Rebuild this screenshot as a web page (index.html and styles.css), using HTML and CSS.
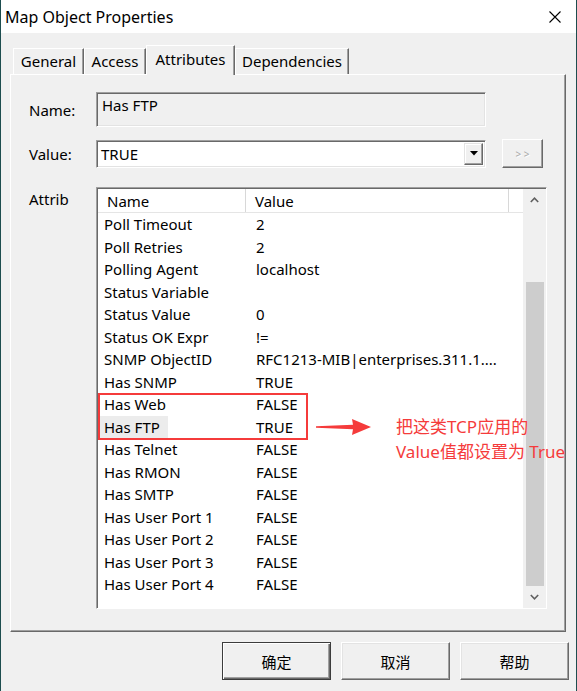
FILE: index.html
```html
<!DOCTYPE html>
<html>
<head>
<meta charset="utf-8">
<link rel="stylesheet" href="styles.css">
</head>
<body>
<div class="window">
  <div class="titlebar">
    <span class="title">Map Object Properties</span>
    <svg class="close" viewBox="0 0 12 12" width="12" height="12"><path d="M0.5 0.5 L11.5 11.5 M11.5 0.5 L0.5 11.5" stroke="#000" stroke-width="1.1" fill="none"/></svg>
  </div>
  <div class="tabs">
    <div class="tab tab-general">General</div>
    <div class="tab tab-access">Access</div>
    <div class="tab tab-attr active">Attributes</div>
    <div class="tab tab-dep">Dependencies</div>
  </div>
  <div class="panel">
    <div class="field-row">
      <div class="label">Name:</div>
      <div class="namebox">Has FTP</div>
    </div>
    <div class="field-row value-row">
      <div class="label">Value:</div>
      <div class="combo">
        <span class="combo-text">TRUE</span>
        <div class="drop"><svg viewBox="0 0 8 5" width="8" height="5"><path d="M0 0 L8 0 L4 4.5 Z" fill="#000"/></svg></div>
      </div>
      <div class="morebtn">&gt; &gt;</div>
    </div>
    <div class="field-row attrib-row">
      <div class="label label-top">Attrib</div>
      <div class="listview">
        <div class="lv-main">
          <div class="lv-header">
            <div class="h-name">Name</div>
            <div class="h-value">Value</div>
            <div class="h-rest"></div>
          </div>
          <div class="lv-row"><div class="c-name">Poll Timeout</div><div class="c-value">2</div></div>
          <div class="lv-row"><div class="c-name">Poll Retries</div><div class="c-value">2</div></div>
          <div class="lv-row"><div class="c-name">Polling Agent</div><div class="c-value">localhost</div></div>
          <div class="lv-row"><div class="c-name">Status Variable</div><div class="c-value"></div></div>
          <div class="lv-row"><div class="c-name">Status Value</div><div class="c-value">0</div></div>
          <div class="lv-row"><div class="c-name">Status OK Expr</div><div class="c-value">!=</div></div>
          <div class="lv-row"><div class="c-name">SNMP ObjectID</div><div class="c-value">RFC1213-MIB|enterprises.311.1....</div></div>
          <div class="lv-row"><div class="c-name">Has SNMP</div><div class="c-value">TRUE</div></div>
          <div class="lv-row"><div class="c-name">Has Web</div><div class="c-value">FALSE</div></div>
          <div class="lv-row"><div class="c-name"><span class="sel">Has FTP</span></div><div class="c-value">TRUE</div></div>
          <div class="lv-row"><div class="c-name">Has Telnet</div><div class="c-value">FALSE</div></div>
          <div class="lv-row"><div class="c-name">Has RMON</div><div class="c-value">FALSE</div></div>
          <div class="lv-row"><div class="c-name">Has SMTP</div><div class="c-value">FALSE</div></div>
          <div class="lv-row"><div class="c-name">Has User Port 1</div><div class="c-value">FALSE</div></div>
          <div class="lv-row"><div class="c-name">Has User Port 2</div><div class="c-value">FALSE</div></div>
          <div class="lv-row"><div class="c-name">Has User Port 3</div><div class="c-value">FALSE</div></div>
          <div class="lv-row"><div class="c-name">Has User Port 4</div><div class="c-value">FALSE</div></div>
        </div>
        <div class="scrollbar">
          <div class="sb-arrow"><svg viewBox="0 0 9 6" width="9" height="6"><polyline points="0.8,5 4.5,1.2 8.2,5" fill="none" stroke="#606060" stroke-width="1.6"/></svg></div>
          <div class="sb-track"><div class="sb-thumb"></div></div>
          <div class="sb-arrow"><svg viewBox="0 0 9 6" width="9" height="6"><polyline points="0.8,1 4.5,4.8 8.2,1" fill="none" stroke="#606060" stroke-width="1.6"/></svg></div>
        </div>
      </div>
    </div>
  </div>
  <div class="buttons">
    <div class="btn default">确定</div>
    <div class="btn">取消</div>
    <div class="btn">帮助</div>
  </div>

  <div class="mark-box"></div>
  <svg class="mark-arrow" viewBox="0 0 55 18" width="55" height="18"><polygon points="0,8.2 37,6.8 36,1 55,9 36,17 37,11.2 0,9.8" fill="#f53b3b"/></svg>
  <div class="mark-text">把这类TCP应用的<br>Value值都设置为 True</div>
</div>
</body>
</html>
```

FILE: styles.css
```css
* { box-sizing: border-box; }
html, body { margin: 0; padding: 0; }
body {
  width: 577px;
  height: 691px;
  overflow: hidden;
  font-family: "Noto Sans", "Noto Sans CJK SC", sans-serif;
  font-size: 15px;
  color: #000;
  background: #f0f0f0;
}
.window {
  position: relative;
  width: 577px;
  height: 691px;
  border-left: 1px solid #1d4d4f;
  border-right: 1px solid #1d4d4f;
  background: #f0f0f0;
  display: flex;
  flex-direction: column;
}
.titlebar {
  height: 33px;
  flex: none;
  background: #fff;
  display: flex;
  align-items: center;
  justify-content: space-between;
  padding: 0 15px 0 4px;
}
.title { font-size: 16px; }
.close { display: block; }

.tabs {
  display: flex;
  align-items: flex-end;
  height: 42px;
  flex: none;
  padding-left: 12px;
  margin-bottom: -1px;
  position: relative;
  z-index: 1;
}
.tab {
  height: 26px;
  margin-bottom: 1px;
  border-top: 1px solid #fff;
  border-left: 1px solid #fff;
  border-right: 1px solid #696969;
  box-shadow: inset -1px 0 #a0a0a0;
  display: flex;
  align-items: center;
  justify-content: center;
  padding-bottom: 1px;
  background: #f0f0f0;
}
.tab-general { width: 71px; }
.tab-access { width: 62px; }
.tab-attr { width: 89px; }
.tab-dep { width: 114px; }
.tab.active {
  height: 30px;
  margin-bottom: 0;
  padding-bottom: 4px;
}

.panel {
  margin-left: 9px;
  width: 556px;
  height: 558px;
  flex: none;
  border: 1px solid;
  border-color: #fff #696969 #696969 #fff;
  box-shadow: inset -1px -1px #a0a0a0;
  padding: 17px 0 0 18px;
}
.field-row { display: flex; align-items: center; }
.label { width: 67px; flex: none; }
.label-top { padding-top: 2px; }
.namebox {
  width: 390px;
  height: 35px;
  border: 1px solid;
  border-color: #a0a0a0 #fff #fff #a0a0a0;
  box-shadow: inset 1px 1px #696969, inset -1px -1px #e3e3e3;
  padding: 2px 5px;
}
.value-row { margin-top: 12px; }
.combo {
  width: 390px;
  height: 28px;
  border: 1px solid;
  border-color: #a0a0a0 #fff #fff #a0a0a0;
  box-shadow: inset 1px 1px #696969, inset -1px -1px #e3e3e3;
  background: #fff;
  display: flex;
  align-items: center;
  padding: 2px 2px 2px 4px;
}
.combo-text { flex: 1; }
.drop {
  width: 19px;
  height: 22px;
  border: 1px solid;
  border-color: #e3e3e3 #696969 #696969 #e3e3e3;
  box-shadow: inset -1px -1px #a0a0a0, inset 1px 1px #fff;
  background: #f0f0f0;
  display: flex;
  align-items: center;
  justify-content: center;
}
.drop svg { display: block; }
.morebtn {
  margin-left: 16px;
  width: 41px;
  height: 29px;
  border: 1px solid;
  border-color: #fff #696969 #696969 #fff;
  box-shadow: inset -1px -1px #a0a0a0;
  display: flex;
  align-items: center;
  justify-content: center;
  font-size: 10px;
  color: #a8a8a8;
  text-shadow: 1px 1px #fff;
}
.attrib-row { margin-top: 19px; align-items: flex-start; }
.listview {
  width: 451px;
  height: 422px;
  border: 1px solid;
  border-color: #a0a0a0 #fff #fff #a0a0a0;
  box-shadow: inset 1px 1px #696969;
  padding: 1px 0 0 1px;
  background: #fff;
  display: flex;
}
.lv-main { flex: 1; }
.lv-header {
  display: flex;
  height: 24px;
  border-bottom: 1px solid #e5e5e5;
}
.h-name {
  width: 148px;
  padding-left: 9px;
  border-right: 1px solid #d8d8d8;
  display: flex;
  align-items: center;
}
.h-value {
  width: 263px;
  padding-left: 9px;
  border-right: 1px solid #d8d8d8;
  display: flex;
  align-items: center;
}
.h-rest { flex: 1; }
.lv-row {
  display: flex;
  height: 22.5px;
  align-items: center;
  white-space: nowrap;
}
.c-name { width: 148px; padding-left: 6px; }
.c-value { padding-left: 10px; }
.sel {
  background: #ececec;
  padding: 1px 8px 1px 4px;
  margin-left: -4px;
}
.scrollbar {
  width: 23px;
  display: flex;
  flex-direction: column;
  background: #f0f0f0;
}
.sb-arrow {
  height: 23px;
  display: flex;
  align-items: center;
  justify-content: center;
}
.sb-arrow svg { display: block; }
.sb-track { flex: 1; padding: 71px 2px 0 3px; }
.sb-thumb { height: 304px; background: #cdcdcd; }

.buttons {
  display: flex;
  justify-content: flex-end;
  gap: 10px;
  padding-right: 7px;
  margin-top: 10px;
}
.btn {
  width: 109px;
  height: 38px;
  border: 1px solid;
  border-color: #fff #696969 #696969 #fff;
  box-shadow: inset -1px -1px #a0a0a0, inset 1px 1px #e3e3e3;
  display: flex;
  align-items: center;
  justify-content: center;
  font-family: "Noto Sans CJK SC", sans-serif;
  font-size: 15px;
}
.btn.default {
  border: 1px solid #3c3c3c;
  box-shadow: inset 1px 1px #fff, inset -1px -1px #696969, inset -2px -2px #a0a0a0;
}

.mark-box {
  position: absolute;
  left: 97px;
  top: 393px;
  width: 210px;
  height: 47px;
  border: 2px solid #f53b3b;
}
.mark-arrow {
  position: absolute;
  left: 315px;
  top: 418px;
}
.mark-text {
  position: absolute;
  left: 395px;
  top: 414px;
  font-family: "Noto Sans", "Noto Sans CJK SC", sans-serif;
  font-size: 17px;
  line-height: 25px;
  color: #f53b3b;
  white-space: nowrap;
}
```
